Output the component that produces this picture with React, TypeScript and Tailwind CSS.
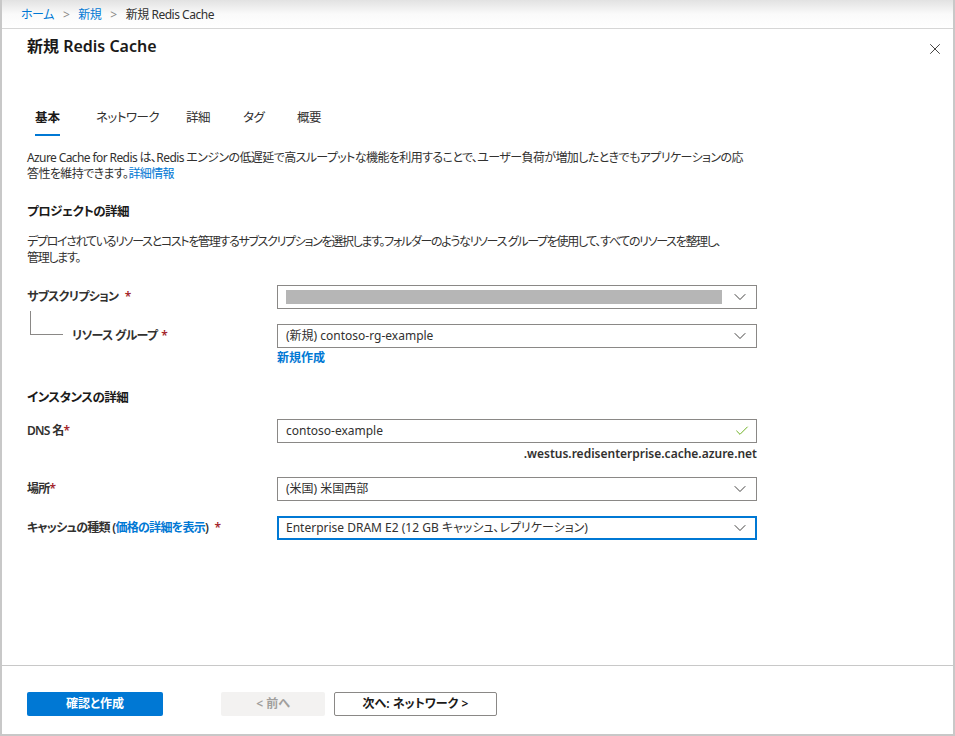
import { ChevronDown, Check, X } from 'lucide-react';

const font = { fontFamily: '"Noto Sans", "Noto Sans CJK JP", sans-serif' };

function Req() {
  return <span className="text-[#a4262c] ml-1">*</span>;
}

function Select({ children, active }: { children: React.ReactNode; active?: boolean }) {
  return (
    <div
      className={`h-6 flex items-center justify-between bg-white ${
        active ? 'border-2 border-[#0078d4] pl-[7px] pr-[5px]' : 'border border-[#8a8886] pl-2 pr-[6px]'
      }`}
    >
      <div className="flex-1 min-w-0 truncate text-[12px] text-[#323130]">{children}</div>
      <ChevronDown className="w-5 h-5 text-[#323130] ml-2 shrink-0" strokeWidth={1.1} />
    </div>
  );
}

const tabs = [
  { label: '基本', w: 'w-[61px]' },
  { label: 'ネットワーク', w: 'w-[90px]' },
  { label: '詳細', w: 'w-[57px]' },
  { label: 'タグ', w: 'w-[54px]' },
  { label: '概要', w: 'w-[50px]' },
];

const label = 'w-[250px] text-[12px] font-semibold pt-[3px] tracking-[-0.06em]';

export default function App() {
  return (
    <div
      style={font}
      className="w-[955px] h-[736px] flex flex-col bg-white border-l-2 border-r-2 border-b-2 border-[#c8c8c8] text-[#323130] overflow-hidden [font-feature-settings:'palt']"
    >
      {/* Breadcrumb */}
      <div className="h-[29px] shrink-0 flex items-center gap-[9px] px-[19px] pt-[2px] text-[12px] tracking-[-0.04em] border-b border-[#d6d6d6] bg-gradient-to-b from-[#e2e2e2] via-[#fafafa] to-white">
        <span className="text-[#0078d4]">ホーム</span>
        <span className="text-[#8a8886]">&gt;</span>
        <span className="text-[#0078d4]">新規</span>
        <span className="text-[#8a8886]">&gt;</span>
        <span>新規 Redis Cache</span>
      </div>

      {/* Title */}
      <div className="flex items-start justify-between pl-[25px] pr-[9px] pt-[5px]">
        <h1 className="text-[16px] font-semibold text-[#1b1a19]">新規 Redis Cache</h1>
        <X className="w-[18px] h-[18px] mt-[6px] text-[#323130]" strokeWidth={1.2} />
      </div>

      {/* Body */}
      <div className="flex-1 px-[25px] pt-[51px]">
        <div className="flex text-[12.5px] pl-[8px]">
          {tabs.map((t, i) => (
            <div key={t.label} className={`${t.w} shrink-0`}>
              <div className="inline-flex flex-col">
                <span className={i === 0 ? 'font-semibold text-[#1b1a19]' : 'text-[#323130] tracking-[-0.04em]'}>
                  {t.label}
                </span>
                <div className={`h-[2px] mt-[6px] ${i === 0 ? 'bg-[#0078d4]' : ''}`} />
              </div>
            </div>
          ))}
        </div>

        <div className="mt-[14px] text-[12px] leading-[16px] whitespace-nowrap tracking-[-0.05em]">
          <div>
            Azure Cache for Redis は、Redis エンジンの低遅延で高スループットな機能を利用することで、ユーザー負荷が増加したときでもアプリケーションの応
          </div>
          <div>
            答性を維持できます。<span className="text-[#0078d4]">詳細情報</span>
          </div>
        </div>

        <h2 className="mt-[21px] text-[12.5px] font-semibold text-[#1b1a19] tracking-[-0.04em]">プロジェクトの詳細</h2>
        <div className="mt-[12px] text-[12px] leading-[16px] whitespace-nowrap tracking-[-0.11em]">
          <div>
            デプロイされているリソースとコストを管理するサブスクリプションを選択します。フォルダーのようなリソース グループを使用して、すべてのリソースを整理し、
          </div>
          <div>管理します。</div>
        </div>

        {/* Subscription */}
        <div className="mt-[19px] flex">
          <div className={label}>
            サブスクリプション <Req />
          </div>
          <div className="w-[480px]">
            <Select>
              <div className="h-[14px] w-[446px] bg-[#b6b6b6] -ml-[3px]" />
            </Select>
          </div>
        </div>

        {/* Resource group */}
        <div className="mt-[15px] flex">
          <div className="w-[250px] flex">
            <div className="w-[33px] h-[24px] ml-[3px] -mt-[13px] border-l border-b border-[#8a8886]" />
            <div className="ml-[9px] text-[12px] font-semibold pt-[3px] tracking-[-0.06em]">
              リソース グループ<Req />
            </div>
          </div>
          <div className="w-[480px]">
            <Select>(新規) contoso-rg-example</Select>
            <div className="text-[12px] font-semibold text-[#0078d4] mt-[1px]">新規作成</div>
          </div>
        </div>

        <h2 className="mt-[22px] text-[12.5px] font-semibold text-[#1b1a19] tracking-[-0.04em]">インスタンスの詳細</h2>

        {/* DNS */}
        <div className="mt-[12px] flex">
          <div className={label}>
            DNS 名<span className="text-[#a4262c]">*</span>
          </div>
          <div className="w-[480px]">
            <div className="h-6 flex items-center justify-between border border-[#8a8886] pl-2 pr-[6px]">
              <span className="text-[12px]">contoso-example</span>
              <Check className="w-4 h-4 text-[#57a300]" strokeWidth={1.3} />
            </div>
            <div className="text-right text-[12px] font-semibold mt-[2px]">.westus.redisenterprise.cache.azure.net</div>
          </div>
        </div>

        {/* Location */}
        <div className="mt-[14px] flex">
          <div className={label}>
            場所<span className="text-[#a4262c]">*</span>
          </div>
          <div className="w-[480px]">
            <Select>(米国) 米国西部</Select>
          </div>
        </div>

        {/* Cache type */}
        <div className="mt-[15px] flex">
          <div className={label}>
            キャッシュの種類 (<span className="text-[#0078d4]">価格の詳細を表示</span>) <Req />
          </div>
          <div className="w-[480px]">
            <Select active>Enterprise DRAM E2 (12 GB キャッシュ、レプリケーション)</Select>
          </div>
        </div>
      </div>

      {/* Footer */}
      <div className="h-[69px] shrink-0 border-t border-[#c8c8c8] flex items-start pt-[26px] px-[25px]">
        <button className="w-[136px] h-[24px] bg-[#0078d4] text-white text-[12px] font-semibold rounded-[2px]">
          確認と作成
        </button>
        <button className="ml-[58px] w-[104px] h-[24px] bg-[#f3f2f1] text-[#a19f9d] text-[12px] font-semibold rounded-[2px]">
          &lt; 前へ
        </button>
        <button className="ml-[9px] w-[163px] h-[24px] bg-white border border-[#8a8886] text-[#1b1a19] text-[12px] font-semibold rounded-[2px]">
          次へ: ネットワーク &gt;
        </button>
      </div>
    </div>
  );
}
